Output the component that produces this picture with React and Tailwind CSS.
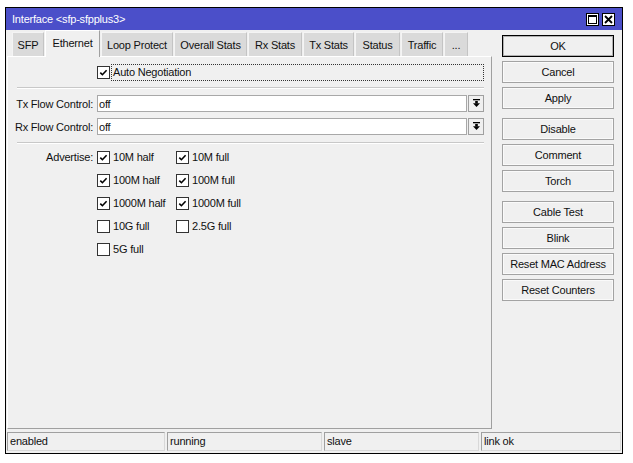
import React from "react";

const Check = ({ on }) => (
    <span className="w-[13px] h-[13px] shrink-0 border border-[#333] bg-white flex items-center justify-center">
        {on && (
            <svg width="11" height="11" viewBox="0 0 11 11">
                <path d="M2.3 5.6 L4.4 7.7 L8.6 3.2" fill="none" stroke="#000" strokeWidth="1.6" />
            </svg>
        )}
    </span>
);

const DropBtn = () => (
    <span className="w-[16px] h-[17px] shrink-0 border border-[#a0a0a0] bg-[#f0f0f0] flex items-center justify-center">
        <svg width="9" height="9" viewBox="0 0 9 9">
            <rect x="1" y="0" width="7" height="1.3" fill="#000" />
            <rect x="3.2" y="2" width="2.6" height="2.5" fill="#000" />
            <polygon points="1,4.3 8,4.3 4.5,8" fill="#000" />
        </svg>
    </span>
);

const tabs = ["SFP", "Ethernet", "Loop Protect", "Overall Stats", "Rx Stats", "Tx Stats", "Status", "Traffic", "..."];
const tabW = [32, 55, 72, 73, 54, 51, 45, 42, 24];

const Btn = ({ children, primary }) => (
    <button
        className={
            "h-[22px] w-full pt-[1px] text-[11px] tracking-[-0.2px] text-[#111] bg-[#f0f0f0] " +
            (primary
                ? "border border-black shadow-[inset_0_0_0_1px_#b0b0b0]"
                : "border border-[#a3a3a3] shadow-[inset_0_0_0_1px_#fafafa]")
        }
    >
        {children}
    </button>
);

const advertise = [
    [["10M half", true], ["10M full", true]],
    [["100M half", true], ["100M full", true]],
    [["1000M half", true], ["1000M full", true]],
    [["10G full", false], ["2.5G full", false]],
    [["5G full", false]],
];

export default function App() {
    return (
        <div className="w-[633px] h-[463px] bg-white pt-[7px] pl-[5px] font-['Liberation_Sans',Arial,sans-serif] text-[11px] tracking-[-0.2px] text-[#111] whitespace-nowrap">
            <div className="w-[618px] h-[447px] border border-black bg-[#f0f0f0] flex flex-col">
                {/* Title bar */}
                <div className="h-[22px] bg-[#4b4fc9] flex items-center justify-between pl-[6px] pr-[7px]">
                    <span className="text-white text-[11px] pt-[1px]">Interface &lt;sfp-sfpplus3&gt;</span>
                    <div className="flex gap-[3px]">
                        <span className="w-[13px] h-[13px] bg-white border border-black flex items-center justify-center">
                            <span className="w-[9px] h-[9px] border border-black border-t-2"></span>
                        </span>
                        <span className="w-[13px] h-[13px] bg-white border border-black flex items-center justify-center">
                            <svg width="9" height="9" viewBox="0 0 9 9">
                                <path d="M1 1 L8 8 M8 1 L1 8" stroke="#000" strokeWidth="1.8" />
                            </svg>
                        </span>
                    </div>
                </div>

                {/* Body */}
                <div className="flex flex-1">
                    {/* Left side: tabs + panel */}
                    <div className="w-[486px] flex flex-col">
                        <div className="h-[26px] flex items-end pl-[6px] gap-[1px]">
                            {tabs.map((t, i) =>
                                i === 1 ? (
                                    <div
                                        key={t}
                                        style={{ width: tabW[i] }}
                                        className="h-[27px] -mb-px z-10 bg-[#f0f0f0] border-t border-l border-white border-r border-r-[#a0a0a0] flex items-center justify-center pb-[2px]"
                                    >
                                        {t}
                                    </div>
                                ) : (
                                    <div
                                        key={t}
                                        style={{ width: tabW[i] }}
                                        className="h-[24px] bg-[#dadada] border-t border-l border-[#f4f4f4] border-r border-r-[#c4c4c4] flex items-center justify-center pt-[1px]"
                                    >
                                        {t}
                                    </div>
                                )
                            )}
                        </div>
                        <div className="flex-1 ml-[1px] border border-t-white border-l-white border-r-[#a0a0a0] border-b-[#a0a0a0] pr-[7px] pt-[7px] flex flex-col">
                            {/* Auto negotiation */}
                            <div className="flex items-center h-[17px]">
                                <span className="w-[89px] shrink-0"></span>
                                <Check on />
                                <span className="flex-1 h-[17px] ml-[1px] border border-dotted border-[#333] flex items-center pl-[1px]">
                                    Auto Negotiation
                                </span>
                            </div>
                            <div className="mt-[6px] ml-[9px] border-t border-[#c8c8c8] border-b border-b-white"></div>

                            {/* Flow control */}
                            <div className="flex items-center h-[17px] mt-[6px]">
                                <span className="w-[85px] shrink-0 text-right pt-[1px]">Tx Flow Control:</span>
                                <span className="flex-1 ml-[4px] h-[17px] bg-white border border-[#a8a8a8] flex items-center pl-[1px] pt-[1px]">off</span>
                                <span className="ml-[1px]"><DropBtn /></span>
                            </div>
                            <div className="flex items-center h-[17px] mt-[6px]">
                                <span className="w-[85px] shrink-0 text-right pt-[1px]">Rx Flow Control:</span>
                                <span className="flex-1 ml-[4px] h-[17px] bg-white border border-[#a8a8a8] flex items-center pl-[1px] pt-[1px]">off</span>
                                <span className="ml-[1px]"><DropBtn /></span>
                            </div>
                            <div className="mt-[7px] ml-[9px] border-t border-[#c8c8c8] border-b border-b-white"></div>

                            {/* Advertise */}
                            <div className="flex mt-[7px]">
                                <span className="w-[85px] shrink-0 h-[13px] flex items-center justify-end">Advertise:</span>
                                <div className="ml-[4px] flex flex-col gap-[10px]">
                                    {advertise.map((row, r) => (
                                        <div key={r} className="flex h-[13px]">
                                            {row.map(([label, on]) => (
                                                <div key={label} className="w-[79px] flex items-center gap-[3px]">
                                                    <Check on={on} />
                                                    <span>{label}</span>
                                                </div>
                                            ))}
                                        </div>
                                    ))}
                                </div>
                            </div>
                        </div>
                    </div>

                    {/* Right buttons */}
                    <div className="w-[112px] ml-[10px] pt-[5px] flex flex-col">
                        <div className="flex flex-col gap-[4px]">
                            <Btn primary>OK</Btn>
                            <Btn>Cancel</Btn>
                            <Btn>Apply</Btn>
                        </div>
                        <div className="flex flex-col gap-[4px] mt-[9px]">
                            <Btn>Disable</Btn>
                            <Btn>Comment</Btn>
                            <Btn>Torch</Btn>
                        </div>
                        <div className="flex flex-col gap-[4px] mt-[9px]">
                            <Btn>Cable Test</Btn>
                            <Btn>Blink</Btn>
                            <Btn>Reset MAC Address</Btn>
                            <Btn>Reset Counters</Btn>
                        </div>
                    </div>
                </div>

                {/* Status bar */}
                <div className="h-[24px] pt-[3px] pb-[2px] pl-[1px] pr-[1px] flex gap-[2px]">
                    {["enabled", "running", "slave", "link ok"].map((s, i) => (
                        <div
                            key={s}
                            className={
                                "h-full border border-t-[#a0a0a0] border-l-[#a0a0a0] border-r-[#d8d8d8] border-b-[#d8d8d8] flex items-center pl-[2px] " +
                                (i === 3 ? "flex-1" : i === 0 ? "w-[158px]" : "w-[155px]")
                            }
                        >
                            {s}
                        </div>
                    ))}
                </div>
            </div>
        </div>
    );
}
